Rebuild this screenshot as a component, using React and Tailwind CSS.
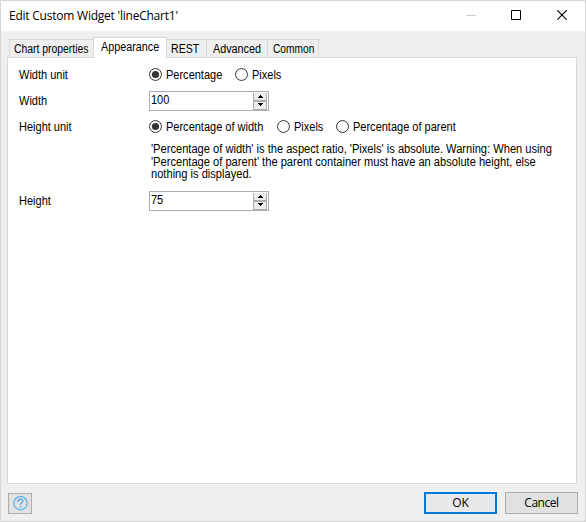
import React from 'react';

const tabs = [
  { label: 'REST', box: 'w-[40px] pl-[4px]', scale: 'scale-x-[0.88]' },
  { label: 'Advanced', box: 'w-[61px] pl-[6px]', scale: 'scale-x-[0.9]' },
  { label: 'Common', box: 'w-[51px] pl-[5px]', scale: 'scale-x-[0.85]' },
];

function Text({ children, scale = 'scale-x-[0.917]' }) {
  return <span className={`inline-block origin-left whitespace-nowrap ${scale}`}>{children}</span>;
}

function Radio({ label, checked, className = '' }) {
  return (
    <label className={`flex items-center gap-1 whitespace-nowrap ${className}`}>
      <svg width="13" height="13" viewBox="0 0 13 13" className="mb-px shrink-0">
        <circle cx="6.5" cy="6.5" r="5.95" fill="#fff" stroke="#333" strokeWidth="1" />
        {checked && <circle cx="6.5" cy="6.5" r="3.6" fill="#333" />}
      </svg>
      <Text>{label}</Text>
    </label>
  );
}

function Spinner({ value }) {
  return (
    <div className="flex h-5 w-[120px] justify-between border border-[#abadb3] bg-white">
      <span className="pl-px leading-[17px]"><Text>{value}</Text></span>
      <div className="mr-px mt-px flex h-[17px] w-[14px] flex-col">
        <div className="flex h-2 items-end justify-center border-x border-b border-[#acacac] bg-[#ececec] pb-[2px]">
          <svg width="5" height="3" viewBox="0 0 5 3" shapeRendering="crispEdges">
            <path d="M2 0h1v1h1v1h1v1H0V2h1V1h1z" fill="#000" />
          </svg>
        </div>
        <div className="flex h-[9px] items-start justify-center border border-[#acacac] bg-[#ececec] pt-px">
          <svg width="5" height="3" viewBox="0 0 5 3" shapeRendering="crispEdges">
            <path d="M0 0h5v1H4v1H3v1H2V2H1V1H0z" fill="#000" />
          </svg>
        </div>
      </div>
    </div>
  );
}

function Row({ label, children }) {
  return (
    <div className="flex h-[26px] items-center">
      <div className="w-[130px]"><Text>{label}</Text></div>
      {children}
    </div>
  );
}

export default function App() {
  return (
    <div className="flex h-[522px] w-[586px] flex-col overflow-hidden border border-[#d6d6d6] bg-[#efefef] font-['Liberation_Sans',Arial,sans-serif] text-[12px] leading-[16px] text-black">
      <header className="flex h-[30px] shrink-0 items-center justify-between bg-white pl-2 pr-[17px]">
        <h1 className="font-['Open_Sans','Noto_Sans',sans-serif] text-[12px] tracking-[-0.23px]">Edit Custom Widget 'lineChart1'</h1>
        <svg width="102" height="12" viewBox="0 0 102 12" fill="none">
          <path d="M0 5.5h10" stroke="#ccc" />
          <path d="M45.5 0.5h9v9h-9z" stroke="#000" />
          <path d="M91.3 0.3l9.4 9.4M100.7 0.3l-9.4 9.4" stroke="#000" strokeWidth="1.1" />
        </svg>
      </header>

      <nav className="z-10 mb-[-1px] ml-2 mt-[6px] flex h-[21px] shrink-0 items-end">
        <div className="h-[19px] w-[84px] border border-r-0 border-[#d9d9d9] pl-[4px] leading-[18px]">
          <Text scale="scale-x-[0.865]">Chart properties</Text>
        </div>
        <div className="h-[21px] w-[74px] border border-b-0 border-[#d9d9d9] bg-white pl-[7px] leading-[18px]">
          <Text scale="scale-x-[0.9]">Appearance</Text>
        </div>
        {tabs.map((t) => (
          <div key={t.label} className={`h-[19px] border border-l-0 border-[#d9d9d9] leading-[18px] ${t.box}`}>
            <Text scale={t.scale}>{t.label}</Text>
          </div>
        ))}
      </nav>

      <main className="ml-[6px] h-[427px] w-[570px] shrink-0 border border-[#d9d9d9] bg-white pl-[11px] pt-1">
        <Row label="Width unit">
          <Radio label="Percentage" checked className="w-[86px]" />
          <Radio label="Pixels" />
        </Row>
        <Row label="Width">
          <Spinner value="100" />
        </Row>
        <Row label="Height unit">
          <Radio label="Percentage of width" checked className="w-[128px]" />
          <Radio label="Pixels" className="w-[59px]" />
          <Radio label="Percentage of parent" />
        </Row>
        <p className="mb-[7px] ml-[132px] mt-[3px] h-[38px] w-[440px] origin-left scale-x-[0.926] whitespace-nowrap leading-[12.5px]">
          'Percentage of width' is the aspect ratio, 'Pixels' is absolute. Warning: When using<br />
          'Percentage of parent' the parent container must have an absolute height, else<br />
          nothing is displayed.
        </p>
        <Row label="Height">
          <Spinner value="75" />
        </Row>
      </main>

      <footer className="mt-2 flex items-start pl-[7px] pr-[7px] font-['Open_Sans','Noto_Sans',sans-serif] text-[12px]">
        <button className="mt-px flex h-[21px] w-6 items-center justify-center border border-[#adadad] bg-[#e1e1e1]">
          <svg width="15" height="15" viewBox="0 0 15 15" fill="none" stroke="#55b0ee" strokeWidth="1.2">
            <circle cx="7.5" cy="7.2" r="6.7" />
            <path d="M5.2 5.9V5.1C5.2 4 6.1 3.2 7.5 3.2s2.3.8 2.3 2c0 1.5-2.3 1.7-2.3 3.5M7.5 9.9v1.5" strokeWidth="1.5" />
          </svg>
        </button>
        <div className="ml-auto flex gap-2">
          <button className="h-[22px] w-[73px] border-2 border-[#0078d7] bg-[#e9e9e9] leading-[18px]">OK</button>
          <button className="h-[22px] w-[73px] border border-[#adadad] bg-[#e1e1e1] leading-[20px] tracking-[-0.45px]">Cancel</button>
        </div>
      </footer>
    </div>
  );
}
